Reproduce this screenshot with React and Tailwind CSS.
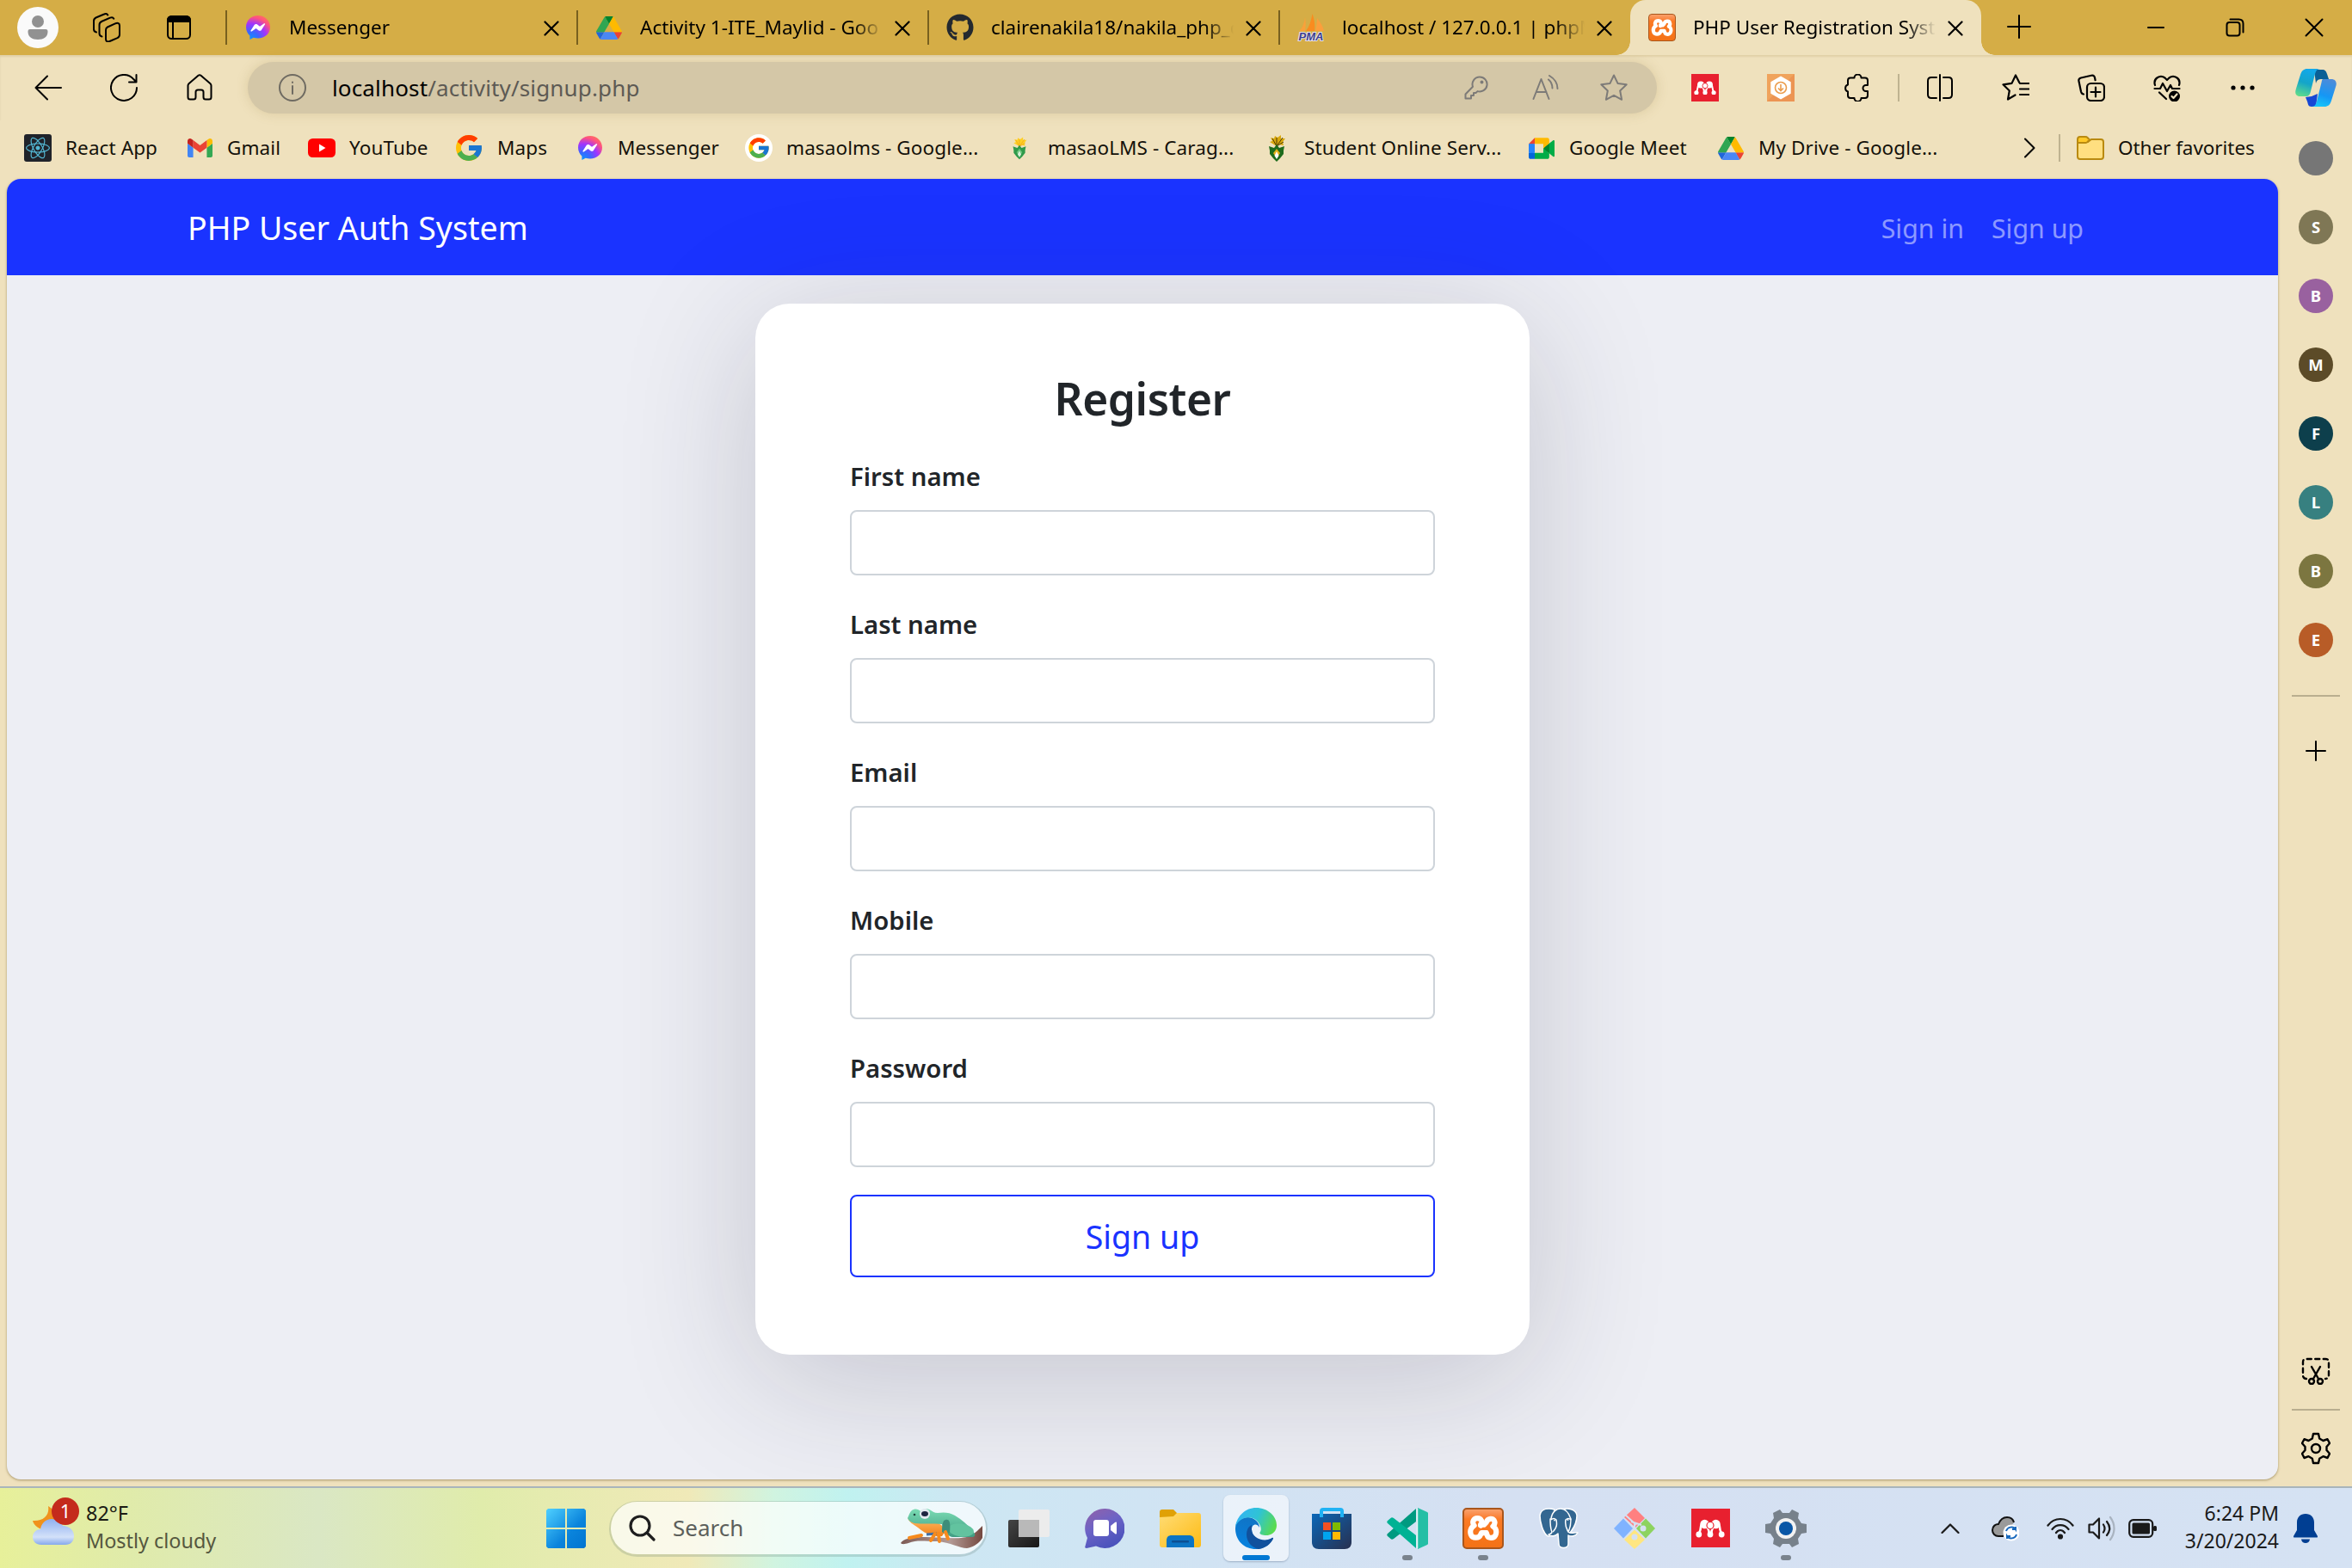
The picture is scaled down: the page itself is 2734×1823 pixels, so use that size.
import React from "react";
import { FcGoogle } from "react-icons/fc";
import { FaReact, FaGithub } from "react-icons/fa";

/* ---------- brand icons ---------- */

function Messenger() {
  return (
    <svg viewBox="0 0 32 32" className="size-8">
      <defs>
        <radialGradient id="msg" cx="0.2" cy="1" r="1.1">
          <stop offset="0" stopColor="#0a95ff" />
          <stop offset="0.3" stopColor="#3a66ff" />
          <stop offset="0.6" stopColor="#a034ff" />
          <stop offset="0.85" stopColor="#ff5280" />
          <stop offset="1" stopColor="#ff7061" />
        </radialGradient>
      </defs>
      <path
        fill="url(#msg)"
        d="M16 2C8 2 2 7.800 2 15.500c0 4.100 1.700 7.500 4.400 9.900V30l4.300-2.300c1.600.5 3.400.8 5.300.8 8 0 14-5.500 14-13S24 2 16 2z"
      />
      <path fill="#fff" d="M7.500 19.500l4.300-6.700c.7-1 2-1.200 3-.5l3.200 2.400 5-3.400c.7-.5 1.500.3 1.100 1l-4.300 6.600c-.7 1-2 1.300-3 .5L13.600 17l-5 3.500c-.7.500-1.500-.3-1.100-1z" />
    </svg>
  );
}

function Drive() {
  return (
    <svg viewBox="0 0 87.300 78" className="h-[27px] w-[30px]">
      <path d="m6.600 66.850 3.850 6.650c.8 1.400 1.950 2.500 3.300 3.300l13.750-23.800h-27.500c0 1.550.4 3.100 1.200 4.500z" fill="#1f66da" />
      <path d="m43.650 25-13.750-23.800c-1.350.8-2.500 1.900-3.300 3.300l-25.400 44a9.060 9.060 0 0 0 -1.200 4.500h27.500z" fill="#30a652" />
      <path d="m73.550 76.800c1.350-.8 2.500-1.900 3.300-3.300l1.600-2.750 7.650-13.250c.8-1.400 1.200-2.950 1.200-4.500h-27.500l5.850 11.500z" fill="#ea4335" />
      <path d="m43.650 25 13.750-23.800c-1.350-.8-2.900-1.200-4.500-1.200h-18.500c-1.600 0-3.150.45-4.500 1.200z" fill="#00832d" />
      <path d="m59.800 53h-32.300l-13.750 23.800c1.350.8 2.900 1.200 4.500 1.200h50.800c1.600 0 3.150-.45 4.500-1.200z" fill="#4a87f5" />
      <path d="m73.400 26.500-12.700-22c-.8-1.400-1.950-2.500-3.300-3.300l-13.750 23.800 16.150 28h27.450c0-1.550-.4-3.100-1.200-4.500z" fill="#ffba00" />
    </svg>
  );
}

function PhpMyAdmin() {
  return (
    <svg viewBox="0 0 32 32" className="size-8 overflow-visible">
      <path fill="#f9a13a" d="M2 20c4-3 6-9 7-16 1 6 1 11 0 16z" />
      <path fill="#f98c1f" d="M10 20c4-5 6-12 7.500-20C20 7 21 14 20 20z" />
      <path fill="#fb9f3c" d="M21 20c1-5 2-10 2-15 4 5 7 10 8 15z" />
      <text x="16" y="31" textAnchor="middle" fontSize="13" fontWeight="700" fontStyle="italic" fontFamily="Liberation Sans, sans-serif" fill="#3d3f8f" stroke="#e5e0e8" strokeWidth="2" paintOrder="stroke">
        PMA
      </text>
    </svg>
  );
}

function Xampp({ big }) {
  return (
    <span
      className={
        (big ? "size-12 rounded-[5px] border-2" : "size-8 rounded-[4px] border-[1.500px]") +
        " flex items-center justify-center border-[#a9561c] bg-linear-to-b from-[#f9a06a] via-[#fb7a24] via-25% to-[#f47216]"
      }
    >
      <svg viewBox="0 0 40 32" className={big ? "h-[31px] w-[38px]" : "h-[22px] w-[26px]"} fill="none" stroke="#fff" strokeLinecap="round" strokeLinejoin="round">
        <path strokeWidth="6.500" d="M17 13c3-4 1-9-4-9-5 0-7 5-4 9-5 3-5 8-4 11 2 5 10 5 12 0l1-2h5" />
        <path strokeWidth="6.500" d="M17 12h4l3-3c1-5 9-6 10-1 1 3-1 5-2 6 4 2 5 7 3 11-2 4-9 4-10 0l-1-3" />
      </svg>
    </span>
  );
}

function Mendeley({ big }) {
  return (
    <span className={(big ? "size-[45px] " : "size-8 ") + "flex items-center justify-center bg-[#e8202f]"}>
      <svg viewBox="0 0 34 22" className={big ? "w-[34px]" : "w-[26px]"} fill="#fff">
        <path fill="none" stroke="#fff" strokeWidth="2.600" d="M3.500 17C6.500 14 5 10 7 6M30.500 17C27.500 14 29 10 27 6M15.500 17C16 13 14.500 11 13 9M18.500 17C18 13 19.500 11 21 9" />
        <circle cx="10.500" cy="6" r="5.200" />
        <circle cx="23.500" cy="6" r="5.200" />
        <circle cx="17" cy="7.500" r="4" stroke="#e8202f" strokeWidth="1.200" />
        <circle cx="3.800" cy="18" r="3.400" />
        <circle cx="17" cy="18" r="3.400" />
        <circle cx="30.200" cy="18" r="3.400" />
      </svg>
    </span>
  );
}

function Gmail() {
  return (
    <svg viewBox="52 42 88 66" className="h-[22px] w-[29px]">
      <path fill="#4285f4" d="M58 108h14V74L52 59v43c0 3.320 2.690 6 6 6" />
      <path fill="#34a853" d="M120 108h14c3.320 0 6-2.690 6-6V59l-20 15" />
      <path fill="#fbbc04" d="M120 48v26l20-15v-8c0-7.420-8.470-11.650-14.400-7.200" />
      <path fill="#ea4335" d="M72 74V48l24 18 24-18v26L96 92" />
      <path fill="#c5221f" d="M52 51v8l20 15V48l-5.600-4.200c-5.940-4.450-14.400-.22-14.400 7.200" />
    </svg>
  );
}

function Meet() {
  return (
    <svg viewBox="0 0 87.500 72" className="h-[25px] w-[30px]">
      <path fill="#00832d" d="M49.500 36l8.530 9.750 11.470 7.330 2-17.020-2-16.640-11.690 6.440z" />
      <path fill="#0066da" d="M0 51.500V66c0 3.315 2.685 6 6 6h14.500l3-10.960-3-9.540-9.950-3z" />
      <path fill="#e94235" d="M20.500 0L0 20.500l10.550 3 9.950-3 2.950-9.410z" />
      <path fill="#2684fc" d="M20.500 20.500H0v31h20.500z" />
      <path fill="#00ac47" d="M82.600 8.680L69.500 19.420v33.660l13.160 10.790c1.970 1.540 4.850.135 4.850-2.370V11c0-2.535-2.945-3.925-4.910-2.320zM49.500 36v15.500h-29V72h43c3.315 0 6-2.685 6-6V53.080z" />
      <path fill="#ffba00" d="M63.500 0h-43v20.500h29V36l20-16.570V6c0-3.315-2.685-6-6-6z" />
    </svg>
  );
}

function Torch({ dark }) {
  const leaf = dark ? "#1d6b1c" : "#2f9a4a";
  const sun = dark ? "#d9a80c" : "#ffd024";
  return (
    <svg viewBox="0 0 24 32" className={dark ? "h-8 w-6" : "h-7 w-5"}>
      <path fill={sun} d="M12 14L4 9l3-1-2-4 4 1 1-3 3 2 4-3v4l5 0-3 4 1 4-5-1z" />
      <path stroke={dark ? "#4c3c05" : "#f0a81c"} strokeWidth="1" fill="none" d="M12 14L7 5M12 14l0-10M12 14l7-10M12 14l8-5" />
      <path fill={leaf} d="M3 14l6 2 3-4 3 4 6-2-1 5 0 4-4 5-4 4-4-4-4-5 0-4z" />
      <path fill={dark ? "#e2b01a" : "#6cc47c"} d="M12 17l4 5-2 3h-4l-2-3z" />
      <path fill={dark ? "#fff" : "#d6efd8"} d="M12 20l2.500 5-2.500 4-2.500-4z" />
    </svg>
  );
}

function Copilot() {
  return (
    <svg viewBox="0 0 48 44" className="h-[44px] w-12">
      <defs>
        <linearGradient id="cpA" x1="0.500" y1="0" x2="0.200" y2="1">
          <stop offset="0" stopColor="#12a8ea" />
          <stop offset="0.500" stopColor="#14a5c9" />
          <stop offset="1" stopColor="#5fdd8a" />
        </linearGradient>
        <linearGradient id="cpB" x1="0.700" y1="0" x2="0.400" y2="1">
          <stop offset="0" stopColor="#4d8bd9" />
          <stop offset="0.600" stopColor="#1597f5" />
          <stop offset="1" stopColor="#18c4f8" />
        </linearGradient>
      </defs>
      <path fill="#0a5f95" d="M22 1h9c4 0 5 2 6 5l2 6h-8c-4 0-6 1-7 5z" />
      <path fill="#1747d4" d="M12 33l7-1 7-3-2 15h-5c-4 0-4-3-5-6z" />
      <path fill="url(#cpB)" d="M32 12h10c5 0 7 4 5 9l-5 16c-1.500 5-4 7-8 7H19c4 0 5-3 6-6l5-20c1-4 1-6 2-6z" />
      <path fill="url(#cpA)" d="M14 0h15c-4 0-5 3-6 6l-5 20c-1 4-2 6-6 6H6c-5 0-7-3-5-9L6 7c1.500-5 4-7 8-7z" />
    </svg>
  );
}

/* ---------- line icons ---------- */

function Line({ className = "size-8", box = "0 0 32 32", w = 2, color = "#000", children }) {
  return (
    <svg viewBox={box} className={"shrink-0 " + className} fill="none" stroke={color} strokeWidth={w} strokeLinecap="round" strokeLinejoin="round">
      {children}
    </svg>
  );
}

const star = "M16 1.500l4.500 9.400 10.200 1.400-7.500 7.200 1.900 10.300L16 24.900 6.900 29.800l1.900-10.300L1.300 12.300l10.200-1.400z";

const Close = () => (
  <Line className="size-[18px]" box="0 0 18 18" w={2.200}>
    <path d="M1.500 1.500l15 15M16.500 1.500l-15 15" />
  </Line>
);

/* ---------- tabs ---------- */

function Tab({ icon, title, active }) {
  return (
    <div
      className={
        "relative flex h-16 w-[408px] shrink-0 items-center " +
        (active ? "rounded-t-[18px] bg-[#efe1bd]" : "")
      }
    >
      {!active && <span className="absolute -left-px h-10 w-[2px] bg-[#78601f]" />}
      <span className="ml-[21px] flex w-8 justify-center">{icon}</span>
      <span className="ml-5 w-[282px] overflow-hidden whitespace-nowrap text-[22.500px] mask-r-from-88% mask-r-to-100%">{title}</span>
      <span className="ml-[14px] pt-0.5">
        <Close />
      </span>
      {active && (
        <>
          <span className="absolute -left-4 bottom-0 size-4 bg-[radial-gradient(circle_at_0_0,#d5ad46_15.500px,#efe1bd_16px)]" />
          <span className="absolute -right-4 bottom-0 size-4 bg-[radial-gradient(circle_at_100%_0,#d5ad46_15.500px,#efe1bd_16px)]" />
        </>
      )}
    </div>
  );
}

function TabStrip() {
  return (
    <header className="flex h-16 items-center bg-[#d5ad46]">
      <div className="flex w-[263px] shrink-0 items-center">
        <span className="ml-5 flex size-12 items-center justify-center rounded-full bg-[#fafafa]">
          <svg viewBox="0 0 24 28" className="h-7 w-6" fill="#919191">
            <circle cx="12" cy="7" r="7" />
            <path d="M3 16h18c2 0 2.500 1 2.500 3 0 6-5 9-11.500 9S.5 25 .5 19c0-2 .5-3 2.500-3z" />
          </svg>
        </span>
        <Line className="ml-[39px] size-[34px]" box="0 0 34 34">
          <path d="M18 16.500l9.500-4.300c2.500-1 4.500 0 4.500 2.500v10.500c0 2-1 3.200-2.500 4l-9 3.800c-2.500 1-4.500 0-4.500-2.500V20c0-1.800.6-2.800 2-3.500z" />
          <path d="M11.500 27.500c-2-.5-3-1.500-3-3.500V14c0-2 1-3.200 2.500-4l10-4.300c2-.9 3.500-.4 4.300 1" />
          <path d="M5 22.500c-2-.5-3-1.500-3-3.500V9.500c0-2 1-3.200 2.500-4L14 1.500c2-.9 3.500-.4 4.300 1" />
        </Line>
        <Line className="ml-[52px] size-[30px]" box="0 0 30 30">
          <rect x="2" y="2" width="26" height="26" rx="4.500" />
          <path d="M2 8V6.500C2 4 4 2 6.500 2h17C26 2 28 4 28 6.500V8z" fill="#000" />
          <path d="M8 9v18" />
        </Line>
      </div>
      <Tab icon={<Messenger />} title="Messenger" />
      <Tab icon={<Drive />} title="Activity 1-ITE_Maylid - Goo" />
      <Tab icon={<FaGithub className="size-8 text-[#24292f]" />} title="clairenakila18/nakila_php_c" />
      <Tab icon={<PhpMyAdmin />} title="localhost / 127.0.0.1 | phpM" />
      <Tab icon={<Xampp />} title="PHP User Registration Syst" active />
      <Line className="ml-[30px] mb-0.5 size-7" box="0 0 28 28">
        <path d="M14 1v26M1 14h26" />
      </Line>
      <Line className="ml-[135px] h-[22px] w-5" box="0 0 20 22">
        <path d="M1 11h18" />
      </Line>
      <Line className="ml-[71px] size-[22px]" box="0 0 22 22">
        <rect x="1.500" y="5" width="15" height="15.500" rx="3" />
        <path d="M5.500 1.500h10c3 0 5 2 5 5v10" />
      </Line>
      <Line className="ml-[70px] size-[22px]" box="0 0 22 22">
        <path d="M1.500 1.500l19 19M20.500 1.500l-19 19" />
      </Line>
    </header>
  );
}

/* ---------- address toolbar ---------- */

function Cell({ children, className = "w-[88px]" }) {
  return <span className={"flex shrink-0 items-center justify-center " + className}>{children}</span>;
}

function Toolbar() {
  return (
    <div className="flex h-[76px] items-center shadow-[inset_0_2px_2px_rgba(120,90,20,0.12)]">
      <Cell className="ml-3 w-[88px]">
        <Line>
          <path d="M31 16H1.500M15 2.500L1.500 16 15 29.500" />
        </Line>
      </Cell>
      <Cell>
        <Line>
          <path d="M31 16A15 15 0 1 1 27.500 6.300L30.500 9.500M30.500 1v8.500H22" />
        </Line>
      </Cell>
      <Cell>
        <Line>
          <path d="M2.500 13.500c0-1 .4-1.700 1-2.300L14.500 1.800c1-.8 2-.8 3 0l11 9.400c.6.600 1 1.300 1 2.300V27c0 1.500-1 2.500-2.500 2.500h-4c-1.500 0-2.500-1-2.500-2.500v-6c0-1.500-1-2.500-2.500-2.500h-4c-1.500 0-2.500 1-2.500 2.500v6c0 1.500-1 2.500-2.500 2.500H5C3.500 29.500 2.500 28.500 2.500 27z" />
        </Line>
      </Cell>
      <div className="ml-3 flex h-[60px] w-[1638px] shrink-0 items-center rounded-full bg-[#d4c7a7] shadow-[0_0_14px_rgba(150,125,60,0.22)]">
        <Line className="ml-9 size-8" color="#6f6b62">
          <circle cx="16" cy="16" r="15" />
          <path d="M16 14v9M16 9.500v.5" />
        </Line>
        <span className="ml-[30px] w-[1298px] shrink-0 whitespace-nowrap text-[26px] tracking-[0.150px] text-[#5d5a54]">
          <span className="text-black">localhost</span>/activity/signup.php
        </span>
        <Line className="ml-[18px] size-7" box="0 0 28 28" color="#7d7b78">
          <path d="M18 1.500a8.500 8.500 0 1 1-2.500 16.600L13.500 20H11v3H8v3.500H1.500v-5L10 12.800A8.500 8.500 0 0 1 18 1.500z" />
          <circle cx="20.500" cy="7.500" r="1" />
        </Line>
        <Line className="ml-[51px] h-[30px] w-8" box="0 0 32 30" color="#7d7b78">
          <path d="M1.500 28L10.500 5l9 23M5 20h11.500M19 5.500c3 2.500 4.500 6 4.500 10M20 1c6 3.500 9.500 8.500 9.500 15" />
        </Line>
        <Line className="ml-[47px] size-8" color="#7d7b78">
          <path d={star} />
        </Line>
      </div>
      <Cell className="ml-3 w-[88px]">
        <Mendeley />
      </Cell>
      <Cell>
        <svg viewBox="0 0 32 32" className="size-8">
          <rect width="32" height="32" fill="#f0a35c" />
          <path d="M0 32L32 0v32z" fill="#e98a4c" opacity=".6" />
          <path d="M16 2.500l11.700 6.700v13.600L16 29.500 4.300 22.800V9.200z" fill="#fff" />
          <g fill="none" stroke="#eb9c4c" strokeWidth="1.600">
            <circle cx="16" cy="16" r="6.500" />
            <path d="M16 12v7M13 16.500l3 3 3-3" />
          </g>
        </svg>
      </Cell>
      <Cell>
        <Line>
          <path d="M9 4.500h4.500a4 4 0 0 1 8 0H26c1.800 0 3 1.200 3 3V13h-2a3.500 3.500 0 0 0 0 7h2v5c0 1.800-1.200 3-3 3h-4.500a4 4 0 0 1-8 0H9c-1.800 0-3-1.200-3-3v-4.500a4.200 4.200 0 0 1 0-8V7.500c0-1.800 1.200-3 3-3z" />
        </Line>
      </Cell>
      <span className="ml-[4px] h-8 w-[2px] bg-[#bfb391]" />
      <Cell className="ml-[3px] w-[88px]">
        <Line>
          <path d="M12 4H6C3.500 4 2 5.500 2 8v16c0 2.500 1.500 4 4 4h6M20 4h6c2.500 0 4 1.500 4 4v16c0 2.500-1.500 4-4 4h-6M16 1v30" />
        </Line>
      </Cell>
      <Cell>
        <Line w={2.200}>
          <path d="M15.500 24.500L7 29.500l1.800-10L1.500 12.300l10-1.400L16 1.500l4.300 8.500M21 11h10.500M21 17.500h10.500M21 24h10.500" />
        </Line>
      </Cell>
      <Cell>
        <Line w={2.200}>
          <path d="M7 23.500c-1.500-.2-2.500-1-3-3L1.500 8.500c-.5-2 .5-3.500 2.500-4l12-2.800c2-.5 3.500.5 4 2.500l.6 3" />
          <rect x="11" y="11" width="20" height="20" rx="4.500" />
          <path d="M21 15.500v11M15.500 21h11" />
        </Line>
      </Cell>
      <Cell>
        <Line w={2.200}>
          <path d="M2 13C-.5 5 8 .5 13.500 4.500L16 7l2.500-2.500C24 .5 32.500 5 30 13M1.500 17h6.500l3-6 5 9 4-7 2 4h8.500M7 21.500l8 7.500" />
          <circle cx="24.500" cy="26" r="6.500" fill="#000" stroke="none" />
          <path d="M21.500 26l2 2 4-4.500" stroke="#efe1bd" />
        </Line>
      </Cell>
      <Cell>
        <svg viewBox="0 0 28 6" className="w-7">
          <circle cx="3" cy="3" r="2.600" />
          <circle cx="14" cy="3" r="2.600" />
          <circle cx="25" cy="3" r="2.600" />
        </svg>
      </Cell>
      <Cell className="ml-px w-20">
        <Copilot />
      </Cell>
    </div>
  );
}

/* ---------- bookmarks ---------- */

const bookmarks = [
  {
    w: "w-[188px]",
    label: "React App",
    icon: (
      <span className="flex size-8 items-center justify-center rounded-[3px] bg-[#20232a]">
        <FaReact className="size-7 text-[#53b7d3]" />
      </span>
    ),
  },
  { w: "w-[142px]", label: "Gmail", icon: <Gmail /> },
  {
    w: "w-[172px]",
    label: "YouTube",
    icon: (
      <svg viewBox="0 0 32 22" className="h-[22px] w-8">
        <rect width="32" height="22" rx="5.500" fill="#f00" />
        <path d="M13 6.500v9l7.500-4.500z" fill="#fff" />
      </svg>
    ),
  },
  { w: "w-[140px]", label: "Maps", icon: <FcGoogle className="-ml-0.5 size-9 shrink-0" /> },
  { w: "w-[196px]", label: "Messenger", icon: <Messenger /> },
  {
    w: "w-[303px]",
    label: "masaolms - Google...",
    icon: (
      <span className="flex size-8 items-center justify-center rounded-full bg-white">
        <FcGoogle className="size-7" />
      </span>
    ),
  },
  { w: "w-[299px]", gap: "ml-[17px]", label: "masaoLMS - Carag...", icon: <Torch /> },
  { w: "w-[308px]", label: "Student Online Serv...", icon: <Torch dark /> },
  { w: "w-[220px]", label: "Google Meet", icon: <Meet /> },
  { w: "w-[353px]", label: "My Drive - Google...", icon: <Drive /> },
];

function Bookmarks() {
  return (
    <div className="flex h-[68px] items-center pb-1 pl-7 text-[22.500px] tracking-[0.100px] whitespace-nowrap text-[#14110a]">
      {bookmarks.map((b, i) => (
        <span key={i} className={"flex shrink-0 items-center " + b.w}>
          <span className="flex w-8 shrink-0 justify-center">{b.icon}</span>
          <span className={b.gap || "ml-4"}>{b.label}</span>
        </span>
      ))}
      <Line className="ml-[2px] h-6 w-4" box="0 0 16 24">
        <path d="M3 1.500L13.500 12 3 22.500" />
      </Line>
      <span className="ml-[26px] h-8 w-[2px] bg-[#bfb391]" />
      <svg viewBox="0 0 32 28" className="ml-[19px] h-7 w-8" stroke="#b98a10" strokeWidth="2">
        <path d="M1 7h12l4-3h11c2 0 3 1.500 3 3v17c0 2-1 3-3 3H4c-2 0-3-1-3-3z" fill="#ffdf80" />
        <path d="M1 8V4c0-2 1-3 3-3h6c1 0 2 .3 2.500 1L15 4.500 12.500 7c-.5.700-1 1-2 1z" fill="#ffc928" />
      </svg>
      <span className="ml-4 tracking-[-0.050px]">Other favorites</span>
    </div>
  );
}

/* ---------- page ---------- */

function Field({ label }) {
  return (
    <label className="flex h-[172px] flex-col">
      <span className="h-[60px] text-[29.300px] leading-[43px] font-semibold text-[#212529]">{label}</span>
      <input className="h-[76px] w-full rounded-lg border-2 border-[#ced4da] bg-white" />
    </label>
  );
}

function Page() {
  return (
    <main className="ml-2 h-[1512px] w-[2640px] overflow-hidden rounded-2xl bg-[#edeef4] shadow-[0_1px_3px_rgba(120,100,50,0.6)]">
      <nav className="flex h-28 items-center bg-[#1a33ff] pr-[226px] pl-[210px] whitespace-nowrap">
        <span className="pt-[3px] text-[37.500px] text-white">PHP User Auth System</span>
        <span className="ml-auto flex gap-8 pt-[3px] text-[30.300px] text-white/50">
          <span>Sign in</span>
          <span>Sign up</span>
        </span>
      </nav>
      <section className="mt-[33px] ml-[870px] h-[1222px] w-[900px] rounded-[40px] bg-white px-[110px] pt-[68px] shadow-[0_28px_160px_rgba(34,35,58,0.2)]">
        <h3 className="mb-[28px] text-center text-[51.500px] leading-[84px] font-semibold tracking-[-0.500px] text-[#212529]">Register</h3>
        <div className="flex flex-col">
          <Field label="First name" />
          <Field label="Last name" />
          <Field label="Email" />
          <Field label="Mobile" />
          <Field label="Password" />
        </div>
        <button className="-mt-[4px] block h-24 w-full rounded-lg border-2 border-[#1a33ff] pt-[3px] text-[37.500px] text-[#1a33ff]">Sign up</button>
      </section>
    </main>
  );
}

function Sidebar() {
  const people = [
    ["", "bg-[#767676]"],
    ["S", "bg-[#7f7755]"],
    ["B", "bg-[#99619f]"],
    ["M", "bg-[#5c4b28]"],
    ["F", "bg-[#0d3f4c]"],
    ["L", "bg-[#378080]"],
    ["B", "bg-[#7c7640]"],
    ["E", "bg-[#b85c27]"],
  ];
  return (
    <aside className="flex w-[86px] flex-col items-center pt-6 pl-0.5">
      {people.map(([l, c], i) => (
        <span key={i} className={"mb-10 flex size-10 shrink-0 items-center justify-center rounded-full text-[18.500px] font-bold text-white " + c}>
          {l}
        </span>
      ))}
      <span className="mt-[4px] h-[2px] w-14 bg-[#b9ae8f]" />
      <Line className="mt-[51px] size-6" box="0 0 24 24">
        <path d="M12 1v22M1 12h22" />
      </Line>
      <Line className="mt-auto h-8 w-[34px]" box="0 0 34 32" w={2.400}>
        <path strokeDasharray="5 4.500" d="M6 25C3 25 2 23 2 21V6c0-3 1-4 4-4h22c3 0 4 1 4 4v15c0 2-1 4-4 4" />
        <path d="M12 11l8 14M22 11l-8 14" />
        <circle cx="12" cy="28" r="3" />
        <circle cx="22" cy="28" r="3" />
      </Line>
      <span className="mt-[28px] h-[2px] w-14 bg-[#b9ae8f]" />
      <Line className="mt-[25px] mb-[25px] h-[38px] w-[34px]" box="0 0 34 38" w={2.400}>
        <path d="M14 2h6l1.200 5.500 4.300 2.500 5-1.800L33 13l-3.500 4v4l3.500 4-2.500 5-5-1.800-4.300 2.500L20 36h-6l-1.200-5.300-4.300-2.500-5 1.800L1 25l3.500-4v-4L1 13l2.500-4.800 5 1.800 4.300-2.500z" />
        <circle cx="17" cy="19" r="5" />
      </Line>
    </aside>
  );
}

/* ---------- taskbar ---------- */

function Frog() {
  return (
    <svg viewBox="0 0 98 48" className="h-12 w-[98px]">
      <defs>
        <linearGradient id="frg" x1="0" y1="0" x2="0" y2="1">
          <stop offset="0" stopColor="#7bdcb4" />
          <stop offset="1" stopColor="#3f9c83" />
        </linearGradient>
        <linearGradient id="bch" x1="0" y1="0" x2="1" y2="0">
          <stop offset="0" stopColor="#7d5b55" />
          <stop offset="0.600" stopColor="#b39a96" />
          <stop offset="1" stopColor="#74483f" />
        </linearGradient>
        <linearGradient id="bly" x1="0" y1="0" x2="0" y2="1">
          <stop offset="0" stopColor="#ffb861" />
          <stop offset="1" stopColor="#f0811a" />
        </linearGradient>
      </defs>
      <path fill="url(#bch)" d="M0 41c3-5 12-7 30-7 16 0 40 4 52-2 5-3 9-7 13-11v14c-4 6-9 10-18 12-8 0-20-7-34-8-16 0-24-2-34 2-4 1-7 2-9 0z" />
      <path fill="url(#bly)" d="M8 12c6 2 18 1 28 3 8 2 14 6 16 12l-4 6c-10 1-20-3-28-10-6-4-10-6-12-11z" />
      <path fill="url(#frg)" d="M8 12c2-4 3-9 7-10 3-1 6 0 8 2 3-3 8-4 12-1 2 1 4 3 8 3 6-1 14-1 20 3 9 5 17 13 23 21 1 3-1 4-4 4H60c-8-2-11-9-12-15-10-1-24 0-32-1-4-1-7-3-8-6z" />
      <ellipse cx="70" cy="26" rx="15" ry="7.500" fill="#62c39f" transform="rotate(8 70 26)" />
      <path fill="#3d8d7a" d="M50 15c7-4 8 2 7 14-3 2-7 1-9-1 0-4 0-9 2-13z" />
      <circle cx="28" cy="7" r="6" fill="#e4e9f0" />
      <ellipse cx="28" cy="7" rx="4" ry="3" fill="#1d2440" />
      <circle cx="16" cy="8" r="1.300" fill="#20423c" />
      <path fill="none" stroke="#3f6fa8" strokeWidth="3" d="M30 31l12-1" />
      <path fill="none" stroke="#f78b1d" strokeWidth="4" strokeLinecap="round" d="M10 35l14-3M40 30l-5 8M44 30l1 9M52 28l3 8" />
    </svg>
  );
}

const EdgeLogo = () => (
  <svg viewBox="0 0 48 48" className="size-12">
    <defs>
      <linearGradient id="edT" x1="0" y1="0.300" x2="1" y2="0.600">
        <stop offset="0" stopColor="#33b4f4" />
        <stop offset="0.500" stopColor="#2fc3d5" />
        <stop offset="1" stopColor="#5bdc4c" />
      </linearGradient>
      <linearGradient id="edM" x1="0.500" y1="0" x2="0.200" y2="1">
        <stop offset="0" stopColor="#1173c4" />
        <stop offset="1" stopColor="#0582e0" />
      </linearGradient>
    </defs>
    <path fill="url(#edM)" d="M0 24c0-9 8-13 14-13 8 0 14 6 14 12-3-6-9-4-9 2 0 8 8 14 17 13 4-.5 6-3 8-3-3 7-10 13-20 13C10 48 0 38 0 24z" />
    <path fill="#11519d" d="M19 20c-4 2-6 6-6 11 0 10 8 16 14 17 8-1 14-6 17-12 0-2-1-1-3 0-9 4-22-1-22-11z" />
    <path fill="url(#edT)" d="M0 22C2 9 12 0 24 0c14 0 24 10 24 20 0 8-6 12-12 12-6 0-9-2-7-4 2-4 0-8-3-12C20 9 6 9 0 22z" />
  </svg>
);

const Elephant = () => (
  <svg viewBox="-1 -1 48 49" className="h-[49px] w-12" fill="#336791" stroke="#fff" strokeWidth="1.500" strokeLinejoin="round">
    <path d="M18 2C12 0 2 0 1 9c0 8 4 20 8 23 2 2 4 1 5-1l3-3V8z" />
    <path d="M27 2c6-2 16-1 17 7 0 7-4 15-8 20l-4 2V8z" />
    <path d="M14 13C15 4 21 1 25 1c7 0 10 6 12 12 0 6-1 11-3 15 3 3 8 0 11 1-2 4-8 5-11 3v10c0 6-11 6-11 0l-1-12c-3 3-8 4-11 1 3-1 4-1 4-3-2-4-2-9-2-15z" />
    <path fill="none" d="M14 14c2-2 4-2 6 0 1 5 1 9-4 14M37 14c-2-2-4-2-6 0-1 5 0 9 3 14" />
    <circle cx="18" cy="14.500" r="0.900" fill="#fff" stroke="none" />
    <circle cx="33.500" cy="14" r="0.900" fill="#fff" stroke="none" />
  </svg>
);

function TaskItem({ children, mark }) {
  return (
    <span className="relative flex h-[93px] w-[88px] shrink-0 items-center justify-center">
      {children}
      {mark && <span className="absolute bottom-[9px] h-1.5 w-3 rounded-full bg-[#7a838d]" />}
    </span>
  );
}

function Taskbar() {
  return (
    <footer className="flex h-[95px] items-center border-t-2 border-[#a9b5bb] bg-[linear-gradient(90deg,#e7f09a_0,#e0ebaa_150px,#dae7c4_370px,#e0ecab_560px,#f0e9b8_800px,#d0f4e0_900px,#c0f2f0_985px,#cde7f3_1110px,#d1e3f3_1400px,#d5e0f2_1750px,#d5e2f3_100%)]">
      <div className="flex w-[635px] shrink-0 items-center">
        <svg viewBox="0 0 56 60" className="mb-[14px] ml-9 h-[60px] w-14">
          <defs>
            <linearGradient id="cld" x1="0" y1="0" x2="0" y2="1">
              <stop offset="0" stopColor="#8fb0f0" />
              <stop offset="0.700" stopColor="#d3e1f9" />
              <stop offset="1" stopColor="#86a9ec" />
            </linearGradient>
          </defs>
          <path fill="#f0921c" d="M20 11c2 11-6 18-18 17 2 8 13 13 21 9 8-5 9-19-3-26z" />
          <path fill="url(#cld)" d="M12 56C6 56 2 52 2 47s4-9 9-9c1-7 6-12 13-12 6 0 11 4 13 8 7 0 13 5 13 11.500S46 56 40 56z" />
          <circle cx="40" cy="17" r="16" fill="#c42b1c" />
          <text x="40" y="25" textAnchor="middle" fontSize="22" fill="#fff" fontFamily="Noto Sans, sans-serif">
            1
          </text>
        </svg>
        <div className="mb-[3px] ml-[8px] text-[23.400px] leading-8">
          <div className="text-[#1b1b14]">82°F</div>
          <div className="text-[#55573f]">Mostly cloudy</div>
        </div>
      </div>
      <svg viewBox="0 0 46 46" className="size-[46px] shrink-0">
        <defs>
          <linearGradient id="win" x1="0" y1="0" x2="1" y2="1">
            <stop offset="0" stopColor="#4fd0ff" />
            <stop offset="0.600" stopColor="#0a84dc" />
            <stop offset="1" stopColor="#0074d0" />
          </linearGradient>
        </defs>
        <path fill="url(#win)" d="M2 0h20v22H0V2zM24 0h20l2 2v20H24zM0 24h22v22H2l-2-2zM24 24h22v20l-2 2H24z" />
      </svg>
      <div className="ml-[29px] flex h-[61px] w-[436px] shrink-0 items-center rounded-full bg-white/70 shadow-[0_1px_0_2px_rgba(90,120,110,0.22)]">
        <Line className="ml-[21px] size-[31px]" box="0 0 31 31" w={3.200} color="#1e1e1e">
          <circle cx="13" cy="13" r="11" />
          <path d="M21 21l8 8" />
        </Line>
        <span className="ml-5 w-[265px] text-[26px] text-[#5c5f5b]">Search</span>
        <Frog />
      </div>
      <span className="w-[6px]" />
      <TaskItem>
        <svg viewBox="0 0 48 44" className="h-11 w-12">
          <defs>
            <linearGradient id="tv" x1="0" y1="0" x2="1" y2="1">
              <stop offset="0" stopColor="#454545" />
              <stop offset="1" stopColor="#181818" />
            </linearGradient>
          </defs>
          <rect x="0" y="12" width="36" height="32" rx="2" fill="url(#tv)" />
          <rect x="12" y="0" width="36" height="32" rx="2" fill="#ececec" />
          <rect x="12" y="12" width="24" height="20" fill="#b9b9b9" />
        </svg>
      </TaskItem>
      <TaskItem>
        <svg viewBox="0 0 46 46" className="size-[46px]">
          <defs>
            <linearGradient id="cht" x1="0" y1="0" x2="0.500" y2="1">
              <stop offset="0" stopColor="#9461a8" />
              <stop offset="0.500" stopColor="#6c63c6" />
              <stop offset="1" stopColor="#4b53bc" />
            </linearGradient>
          </defs>
          <path fill="url(#cht)" d="M23 0a23 23 0 1 1-10 43.500L2 46c-2 0-2-1-1.500-2.500L3 34A23 23 0 0 1 23 0z" />
          <rect x="10" y="13" width="18" height="19" rx="3" fill="#fff" />
          <path fill="#fff" d="M30 20l5-4c1-1 2-.5 2 .5v12c0 1-1 1.500-2 .5l-5-4z" />
        </svg>
      </TaskItem>
      <TaskItem>
        <svg viewBox="0 0 48 44" className="h-11 w-12">
          <defs>
            <linearGradient id="fld" x1="0" y1="0" x2="1" y2="1">
              <stop offset="0" stopColor="#ffdc75" />
              <stop offset="1" stopColor="#fdbb14" />
            </linearGradient>
          </defs>
          <path fill="#e0a106" d="M0 3c0-2 1-3 3-3h13l5 5v8H0z" />
          <path fill="url(#fld)" d="M0 9l16-1 4-4h25c2 0 3 1 3 3v34c0 2-1 3-3 3H3c-2 0-3-1-3-3z" />
          <path fill="#0b74c4" d="M8 44V36c0-4 2-6 6-6h20c4 0 6 2 6 6v8z" />
          <rect x="14" y="36" width="20" height="2.500" rx="1" fill="#0b4f93" />
        </svg>
      </TaskItem>
      <span className="relative flex h-[93px] w-[88px] shrink-0 items-center justify-center">
        <span className="flex h-[77px] w-[76px] items-center justify-center rounded-lg bg-white/55 shadow-[0_1px_2px_rgba(80,100,130,0.4)]">
          <EdgeLogo />
        </span>
        <span className="absolute bottom-[9px] h-1.5 w-8 rounded-full bg-[#0078d4]" />
      </span>
      <TaskItem>
        <svg viewBox="0 0 46 48" className="h-12 w-[46px]">
          <defs>
            <linearGradient id="sto" x1="0" y1="0" x2="1" y2="1">
              <stop offset="0" stopColor="#0a67b8" />
              <stop offset="1" stopColor="#28304f" />
            </linearGradient>
          </defs>
          <path fill="url(#sto)" d="M0 7h46v33c0 5-3 8-8 8H8c-5 0-8-3-8-8z" />
          <path fill="none" stroke="#1fb2f4" strokeWidth="4" d="M11 11V4c0-1.500.5-2 2-2h20c1.500 0 2 .5 2 2v7" />
          <rect x="13" y="17" width="9" height="9" fill="#f25022" />
          <rect x="24" y="17" width="9" height="9" fill="#7fba00" />
          <rect x="13" y="28" width="9" height="9" fill="#00a4ef" />
          <rect x="24" y="28" width="9" height="9" fill="#ffb900" />
        </svg>
      </TaskItem>
      <TaskItem mark>
        <svg viewBox="0 0 48 48" className="size-12">
          <path fill="#019a80" d="M34 1v15L8 36c-1.500 1-2.500 1-3.500 0L1 33c-1-1-1-2 0-3z" />
          <path fill="#00b294" d="M34 47V32L8 12c-1.500-1-2.500-1-3.500 0L1 15c-1 1-1 2 0 3z" />
          <path fill="#24bfa5" d="M36 0l11 5c1 .5 1 1 1 2v34c0 1 0 1.500-1 2l-11 5z" />
          <path stroke="#e4f4f4" strokeWidth="1.500" d="M35.500 1v46" />
        </svg>
      </TaskItem>
      <TaskItem mark>
        <Xampp big />
      </TaskItem>
      <TaskItem>
        <Elephant />
      </TaskItem>
      <TaskItem>
        <svg viewBox="0 0 48 48" className="size-12">
          <path fill="#ff8080" d="M24 0l12 12-11 11-13-12z" />
          <path fill="#80b3ff" d="M11 12.500l11 11.500-11 11.500L0 24z" />
          <path fill="#8dd35f" d="M37 12.500L48 24 37 35.500 26 24z" />
          <path fill="#ffe680" d="M24 25.500L36 37 24 48 12 37z" />
          <g stroke="#d5e1f2" strokeWidth="2" fill="none">
            <path d="M12 7l14 13M24 18v8M20 16l12 4" />
          </g>
          <circle cx="24" cy="34" r="3.500" fill="#d5e1f2" />
          <circle cx="34" cy="24" r="3.500" fill="#d5e1f2" />
        </svg>
      </TaskItem>
      <TaskItem>
        <Mendeley big />
      </TaskItem>
      <TaskItem mark>
        <svg viewBox="0 0 48 48" className="size-12">
          <path fill="#77818b" d="M17 2l3 4h8l3-4 8 4-1 6 4 6 6 1v10l-6 1-4 6 1 6-8 4-3-4h-8l-3 4-8-4 1-6-4-6-6-1V19l6-1 4-6-1-6z" />
          <circle cx="24" cy="24" r="12" fill="#f2f2f2" />
          <circle cx="24" cy="24" r="8" fill="#0a57a6" />
        </svg>
      </TaskItem>
      <Line className="ml-[136px] h-3 w-[22px]" box="0 0 22 12" color="#1a1a1a" w={2.200}>
        <path d="M1.500 11L11 1.500l9.500 9.500" />
      </Line>
      <svg viewBox="0 0 32 30" className="ml-[37px] h-[30px] w-8 shrink-0">
        <path fill="#9a9a9a" stroke="#111" strokeWidth="2" d="M14 24H8c-4 0-7-3-7-7 0-5 4-7 7-7 2-5 5-8 10-8 4 0 7 2 8 6" />
        <circle cx="23" cy="20" r="9.500" fill="#fff" />
        <path fill="none" stroke="#1668bd" strokeWidth="2" d="M17 18c1.500-5 8.500-6 11-2v-3M28 16h-4M29 22c-1.500 5-8.500 6-11 2v3M18 24h4" />
      </svg>
      <Line className="ml-[32px] h-[26px] w-8" box="0 0 32 26" color="#1a1a1a" w={2.200}>
        <path d="M1.500 9.500C9-.5 23-.5 30.500 9.500M6.500 14c5-6.500 14-6.500 19 0M11 18c3-4 7-4 10 0" />
        <circle cx="16" cy="22.500" r="2" fill="#1a1a1a" />
      </Line>
      <Line className="ml-4 h-[30px] w-8" box="0 0 32 30" color="#1a1a1a" w={2.200}>
        <path d="M1.500 10.500h4.500l7-7v23l-7-7H1.500zM18 10.500c2 3 2 6 0 9M22 7c4 5 4 11 0 16" />
        <path d="M26 2c6 8 6 18 0 26" stroke="#a9b3c0" />
      </Line>
      <svg viewBox="0 0 34 22" className="ml-[15px] h-[22px] w-[34px] shrink-0">
        <rect x="1.200" y="1.200" width="27" height="19.600" rx="4.500" fill="none" stroke="#1a1a1a" strokeWidth="2.200" />
        <rect x="4.500" y="4.500" width="20.500" height="13" rx="1.500" fill="#1a1a1a" />
        <rect x="29" y="8" width="4" height="6" rx="1.500" fill="#1a1a1a" />
      </svg>
      <div className="mb-[3px] ml-auto text-right text-[23px] leading-8 text-[#1a1a1a]">
        <div>6:24 PM</div>
        <div>3/20/2024</div>
      </div>
      <svg viewBox="0 0 28 34" className="mr-[40px] ml-[17px] h-[34px] w-7 shrink-0" fill="#003e92">
        <path d="M14 0c6 0 10 4 10 10v9l4 7c0 1 0 1.500-1 1.500H1C0 27.500 0 27 0 26l4-7v-9C4 4 8 0 14 0z" />
        <path d="M9 29.500h10c-.5 6-9.500 6-10 0z" />
      </svg>
    </footer>
  );
}

export default function App() {
  return (
    <div className="flex h-[1823px] w-[2734px] flex-col overflow-hidden bg-[#efe1bd] font-['Noto_Sans','Open_Sans',sans-serif] text-black">
      <TabStrip />
      <Toolbar />
      <div className="flex h-[1588px]">
        <div className="flex w-[2648px] shrink-0 flex-col">
          <Bookmarks />
          <Page />
        </div>
        <Sidebar />
      </div>
      <Taskbar />
    </div>
  );
}
